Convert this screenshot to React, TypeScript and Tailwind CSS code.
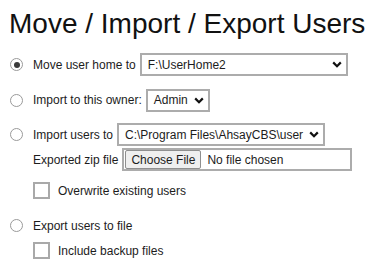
const Chevron = () => (
  <svg width="10" height="7" viewBox="0 0 10 7" className="shrink-0">
    <path d="M1.2 1.4 L5 5.2 L8.8 1.4" fill="none" stroke="#111" strokeWidth="2.2" />
  </svg>
);

const Radio = ({ checked = false }: { checked?: boolean }) => (
  <div className="w-[13px] h-[13px] rounded-full border-[1.5px] border-[#9a9a9a] bg-white flex items-center justify-center shrink-0">
    {checked && <div className="w-[6px] h-[6px] rounded-full bg-[#3a3a3a]" />}
  </div>
);

const Checkbox = () => (
  <div className="w-[17px] h-[17px] border-2 border-[#a9a9a9] bg-white shrink-0" />
);

const FakeSelect = ({ value, className }: { value: string; className: string }) => (
  <div
    className={`h-[23px] border-2 border-[#acacac] bg-white flex items-center justify-between pl-[6px] pr-[4px] gap-[4px] ${className}`}
  >
    <span className="whitespace-nowrap">{value}</span>
    <Chevron />
  </div>
);

export default function App() {
  return (
    <div
      className="w-[380px] h-[270px] bg-white text-[#1c1c1c] text-[12px] overflow-hidden"
      style={{ fontFamily: '"Liberation Sans", Arial, sans-serif' }}
    >
      <h1 className="text-[28px] leading-[32px] text-[#111] pl-[9px] pt-[8px]">
        Move / Import / Export Users
      </h1>

      <div className="flex flex-col pl-[10px] mt-[13px]">
        {/* Move user home */}
        <div className="flex items-center h-[23px]">
          <Radio checked />
          <span className="ml-[10px] mr-[4px]">Move user home to</span>
          <FakeSelect value="F:\UserHome2" className="w-[208px]" />
        </div>

        {/* Import to owner */}
        <div className="flex items-center h-[22px] mt-[13px]">
          <Radio />
          <span className="ml-[10px] mr-[4px]">Import to this owner:</span>
          <FakeSelect value="Admin" className="w-[64px] h-[22px]" />
        </div>

        {/* Import users */}
        <div className="flex items-center h-[23px] mt-[12px]">
          <Radio />
          <span className="ml-[10px] mr-[4px]">Import users to</span>
          <FakeSelect value="C:\Program Files\AhsayCBS\user" className="w-[208px]" />
        </div>

        <div className="flex items-center h-[23px] mt-[2px] pl-[23px]">
          <span className="mr-[4px]">Exported zip file</span>
          <div className="w-[230px] h-[23px] border-2 border-[#acacac] bg-white flex items-center pl-[1px]">
            <div className="h-[19px] px-[5px] bg-[#efefef] border border-[#8f8f8f] rounded-[2px] flex items-center whitespace-nowrap">
              Choose File
            </div>
            <span className="ml-[6px] whitespace-nowrap">No file chosen</span>
          </div>
        </div>

        <div className="flex items-center h-[17px] mt-[11px] pl-[23px]">
          <Checkbox />
          <span className="ml-[8px]">Overwrite existing users</span>
        </div>

        {/* Export users */}
        <div className="flex items-center h-[17px] mt-[18px]">
          <Radio />
          <span className="ml-[10px]">Export users to file</span>
        </div>

        <div className="flex items-center h-[17px] mt-[8px] pl-[23px]">
          <Checkbox />
          <span className="ml-[8px]">Include backup files</span>
        </div>
      </div>
    </div>
  );
}
